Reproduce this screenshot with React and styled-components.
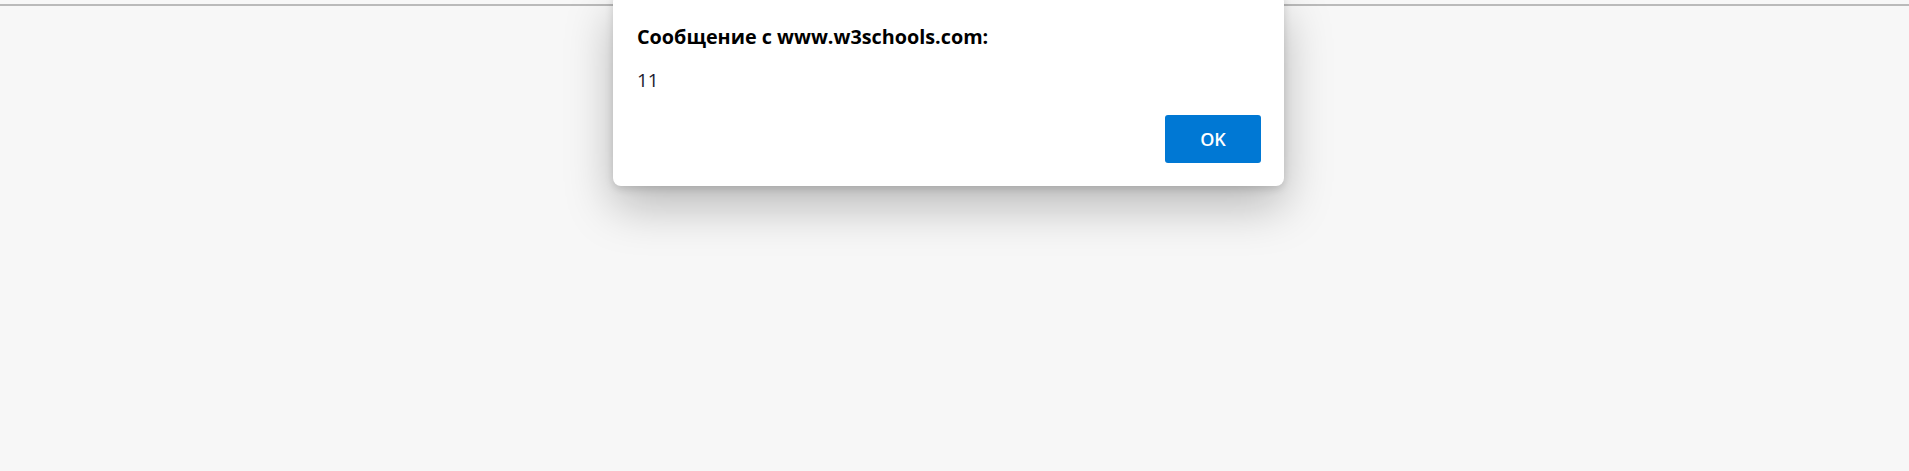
import React from 'react';
import styled, { createGlobalStyle } from 'styled-components';

const GlobalStyle = createGlobalStyle`
  html, body {
    margin: 0;
    padding: 0;
    background: #f7f7f7;
  }
  body {
    font-family: "Open Sans", "Noto Sans", "Liberation Sans", sans-serif;
  }
`;

const Page = styled.div`
  position: relative;
  width: 100%;
  height: 471px;
  overflow: hidden;
  background: #f7f7f7;
`;

const TopRule = styled.div`
  margin-top: 4px;
  height: 2px;
  background: #bababa;
`;

const Dialog = styled.div`
  position: absolute;
  top: -6px;
  left: 613px;
  width: 671px;
  height: 192px;
  box-sizing: border-box;
  background: #ffffff;
  border-radius: 8px;
  box-shadow: 0 20px 48px rgba(0, 0, 0, 0.26), 0 3px 8px rgba(0, 0, 0, 0.14);
  padding: 29px 23px 23px 24px;
  display: flex;
  flex-direction: column;
`;

const Title = styled.h1`
  margin: 0;
  font-size: 19.8px;
  font-weight: 700;
  line-height: 28px;
  color: #000;
`;

const Message = styled.p`
  margin: 16px 0 0;
  font-size: 19px;
  line-height: 26px;
  color: #1a1a2e;
`;

const Actions = styled.div`
  margin-top: auto;
  display: flex;
  justify-content: flex-end;
`;

const Button = styled.button`
  width: 96px;
  height: 48px;
  border: none;
  border-radius: 3px;
  background: #0078d4;
  color: #fff;
  font-family: "Open Sans", "Noto Sans", sans-serif;
  font-size: 18px;
  font-weight: 600;
  cursor: pointer;
`;

export default function App() {
  return (
    <>
      <GlobalStyle />
      <Page>
        <TopRule />
        <Dialog>
          <Title>Сообщение с www.w3schools.com:</Title>
          <Message>11</Message>
          <Actions>
            <Button>OK</Button>
          </Actions>
        </Dialog>
      </Page>
    </>
  );
}
